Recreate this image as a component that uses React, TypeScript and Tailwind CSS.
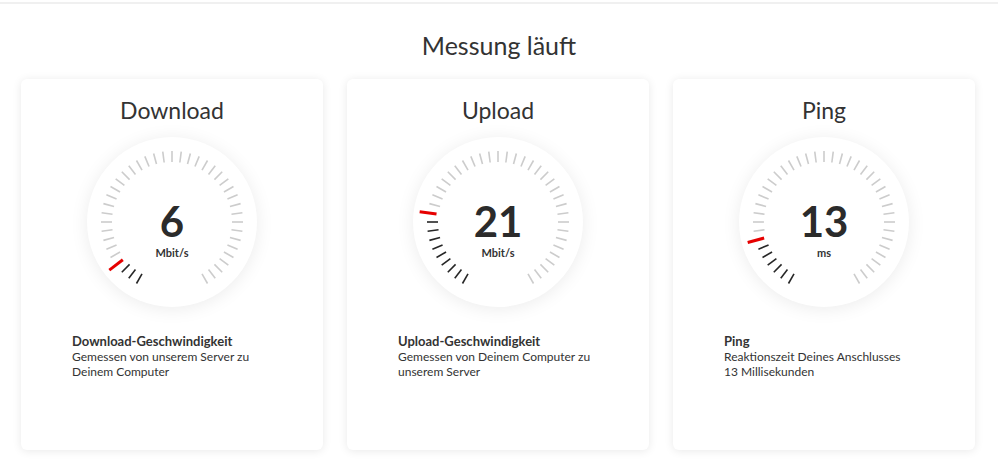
import React from "react";

type Meter = {
  title: string;
  value: string;
  unit: string;
  active: number;
  label: string;
  desc: string[];
};

const meters: Meter[] = [
  {
    title: "Download",
    value: "6",
    unit: "Mbit/s",
    active: 3,
    label: "Download-Geschwindigkeit",
    desc: ["Gemessen von unserem Server zu", "Deinem Computer"],
  },
  {
    title: "Upload",
    value: "21",
    unit: "Mbit/s",
    active: 9,
    label: "Upload-Geschwindigkeit",
    desc: ["Gemessen von Deinem Computer zu", "unserem Server"],
  },
  {
    title: "Ping",
    value: "13",
    unit: "ms",
    active: 6,
    label: "Ping",
    desc: ["Reaktionszeit Deines Anschlusses", "13 Millisekunden"],
  },
];

const TICKS = 41;
const C = 85;

function Ticks({ active }: { active: number }) {
  const lines = [];
  for (let i = 0; i < TICKS; i++) {
    const deg = -150 + i * 7.5;
    const rad = (deg * Math.PI) / 180;
    const s = Math.sin(rad);
    const c = -Math.cos(rad);
    const isRed = i === active;
    const r1 = isRed ? 62 : 60;
    const r2 = isRed ? 79 : 71;
    const color = isRed ? "#e60000" : i < active ? "#262626" : "#cccccc";
    lines.push(
      <line
        key={i}
        x1={C + s * r1}
        y1={C + c * r1}
        x2={C + s * r2}
        y2={C + c * r2}
        stroke={color}
        strokeWidth={isRed ? 3 : 1.6}
      />
    );
  }
  return (
    <svg className="absolute inset-0" width={170} height={170} viewBox="0 0 170 170">
      {lines}
    </svg>
  );
}

function Card({ m }: { m: Meter }) {
  return (
    <div className="w-[302px] h-[371px] shrink-0 bg-white rounded-[6px] shadow-[0_1px_10px_rgba(0,0,0,0.09)] flex flex-col items-center pt-[16px]">
      <h2 className="text-[23px] leading-[30px] text-[#333] font-normal">{m.title}</h2>
      <div className="relative mt-[12px] w-[170px] h-[170px] rounded-full bg-white shadow-[0_2px_18px_rgba(0,0,0,0.08)] flex flex-col items-center justify-center">
        <Ticks active={m.active} />
        <div className="flex flex-col items-center pt-[12px]">
          <div className="text-[42px] leading-[46px] font-bold text-[#2b2b2b]">{m.value}</div>
          <div className="text-[11px] leading-[12px] font-bold text-[#333] mt-[3px]">{m.unit}</div>
        </div>
      </div>
      <div className="w-[200px] mt-[26px] text-[#333]">
        <div className="text-[13px] leading-[16px] font-bold">{m.label}</div>
        {m.desc.map((line) => (
          <div key={line} className="text-[12px] leading-[15px] whitespace-nowrap">
            {line}
          </div>
        ))}
      </div>
    </div>
  );
}

export default function App() {
  return (
    <div className="min-h-screen bg-white font-['Lato',sans-serif]">
      <div className="mt-[2px] h-[2px] bg-[#f0f0f0]" />
      <h1 className="mt-[25px] text-center text-[25px] leading-[32px] text-[#333] font-normal">
        Messung läuft
      </h1>
      <div className="flex gap-[24px] pl-[21px] mt-[18px]">
        {meters.map((m) => (
          <Card key={m.title} m={m} />
        ))}
      </div>
    </div>
  );
}
